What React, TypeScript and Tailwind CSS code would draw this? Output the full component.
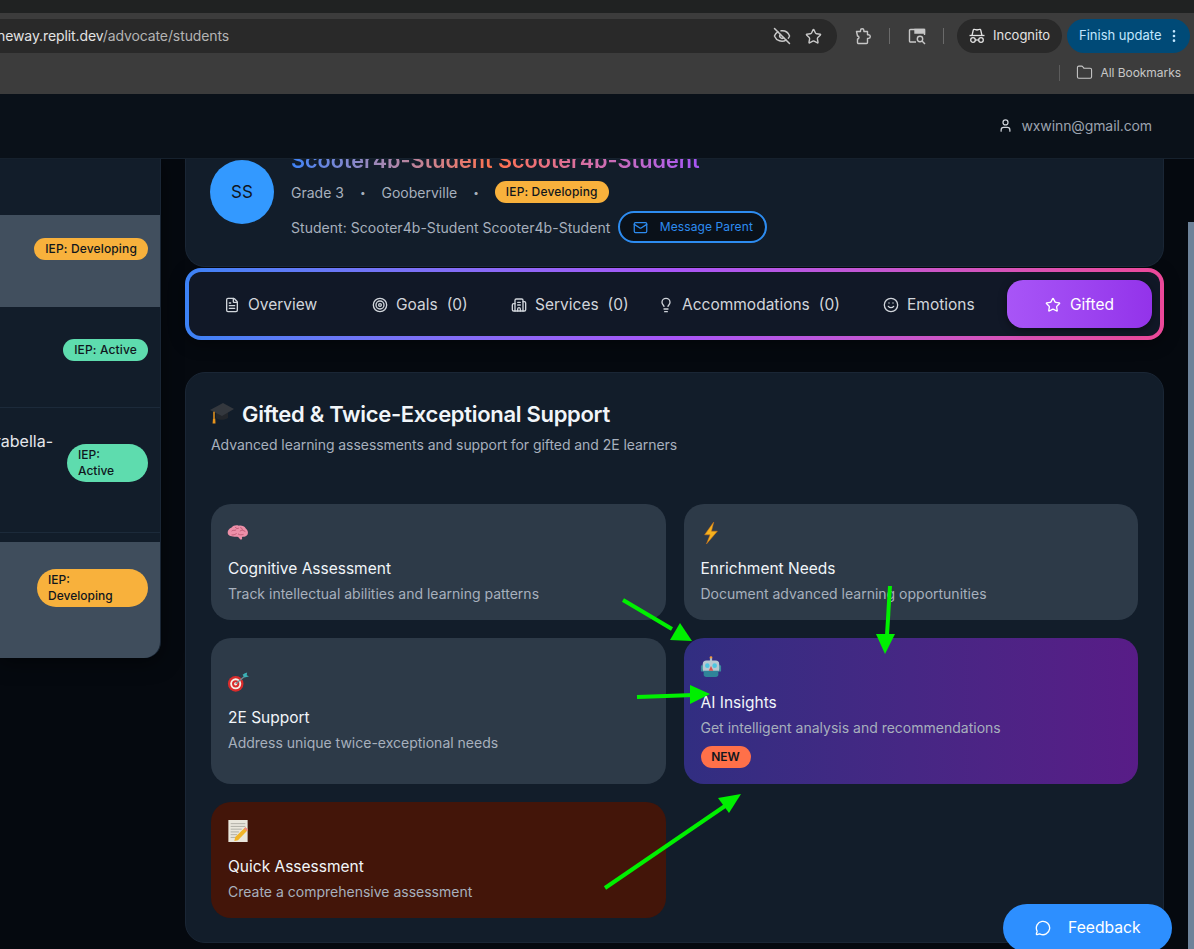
import { EllipsisVertical, EyeOff, FileText, Folder, Lightbulb, Mail, MessageCircle, Smile, Star, Target, User, Building2 } from "lucide-react";
import type { ReactNode } from "react";

// --- small drawings for the emoji in the cards ---
function CapEmoji() {
  return (
    <svg width="24" height="24" viewBox="0 0 24 24" className="shrink-0 -ml-[1px] -mt-[3px]">
      <path d="M6 11v6c2 2.4 9 2.4 12 0v-6z" fill="#23262b" />
      <path d="M0 9 13 2l11 6-12 7z" fill="#34383e" />
      <path d="M4 10.800v7" stroke="#e8941c" strokeWidth="1.500" />
      <path d="M3 17.500h2.200l.3 5H2.600z" fill="#e8941c" />
    </svg>
  );
}
function BrainEmoji() {
  return (
    <svg width="22" height="22" viewBox="0 0 24 24">
      <path d="M1 13c-1-4 2-6 4-7 2-2.500 5-3 8-2 3-.5 6 .5 7.500 3 2 1.500 3 4 2 6.500-1 1.800-3 2.500-5 2.500-1 0-1.500 .5-1 2 .2 1-1.500 1.500-2.500 .5-.8-1-1.500-2.500-3-2.500-3.500 0-9-.5-10-3z" fill="#ec8fa8" />
      <path d="M5 10c2-2 3 0 5-1.500M9 5.500c1 2 3 2 4 1M14 10c2-1.500 4-1 6 .5M5 14c2 .5 4-.5 5.500-1.500M12 13c2 1.500 4 1 6 .5M15 5.500c0 1.500 1 2.500 2.500 2.500" stroke="#b9536f" strokeWidth="0.900" fill="none" />
    </svg>
  );
}
function BoltEmoji() {
  return (
    <svg width="22" height="22" viewBox="0 0 24 24">
      <path d="M15 0 5 14h6l-4 10 12-14h-6.500z" fill="#f6b21e" stroke="#c9701a" strokeWidth="0.600" />
    </svg>
  );
}
function DartEmoji() {
  return (
    <svg width="22" height="22" viewBox="0 0 24 24">
      <circle cx="9.500" cy="14" r="8.500" fill="#d92b2b" />
      <circle cx="9.500" cy="14" r="6" fill="#f3efe6" />
      <circle cx="9.500" cy="14" r="4" fill="#d92b2b" />
      <circle cx="9.500" cy="14" r="1.800" fill="#f3efe6" />
      <path d="M9.500 14 19 6" stroke="#6d8a93" strokeWidth="1.400" />
      <path d="m17 4 2 3 5-1-2.500-1.500 .5-3-2.500 1z" fill="#3bb0b5" />
    </svg>
  );
}
function RobotEmoji() {
  return (
    <svg width="22" height="22" viewBox="0 0 24 24">
      <circle cx="12" cy="1.800" r="1.500" fill="#f29a3e" />
      <rect x="10.800" y="2.500" width="2.400" height="3" fill="#a9bcc6" />
      <rect x="1" y="10" width="3" height="7" rx="1" fill="#3a8a9c" />
      <rect x="20" y="10" width="3" height="7" rx="1" fill="#3a8a9c" />
      <rect x="3" y="5" width="18" height="13" rx="4" fill="#b8c9d1" />
      <path d="M4 16h16v4a3 3 0 0 1-3 3H7a3 3 0 0 1-3-3z" fill="#2f8499" />
      <circle cx="8" cy="10.500" r="2.500" fill="#4fc6e0" />
      <circle cx="16" cy="10.500" r="2.500" fill="#4fc6e0" />
      <path d="m12 11 2.500 5h-5z" fill="#d9534f" />
    </svg>
  );
}
function MemoEmoji() {
  return (
    <svg width="22" height="22" viewBox="0 0 24 24">
      <rect x="1.500" y="0" width="21" height="24" fill="#e9e6dc" />
      <path d="M4 4h16M4 7h16M4 10h12M4 13h9M4 16h7M4 19h6" stroke="#9b9b93" strokeWidth="0.800" />
      <path d="m20 8 3 2.500L12 22l-4 1 1-4.500z" fill="#f0b429" />
      <path d="m20 8 3 2.500-1.500 1.500-3-2.500z" fill="#e88" />
    </svg>
  );
}
function TabSearch() {
  return (
    <svg width="18" height="18" viewBox="0 0 18 18" fill="none" stroke="#c7c7c7" strokeWidth="1.400">
      <path d="M8 15H2.500A1 1 0 0 1 1.500 14V3.500a1 1 0 0 1 1-1H16a.5 .5 0 0 1 .5 .5V8" />
      <path d="M7 2.500h9.500V6H7z" fill="#c7c7c7" />
      <circle cx="12" cy="12" r="2.700" />
      <path d="m14 14 3 3" />
    </svg>
  );
}
function IncognitoIcon() {
  return (
    <svg width="18" height="18" viewBox="0 0 18 18" fill="none" stroke="#e3e3e3" strokeWidth="1.300">
      <path d="M1.500 8.500h15" />
      <path d="m4 8.500 1.300-5.500c.2-.6.7-.8 1.300-.6L9 3l2.400-.6c.6-.2 1.100 0 1.300 .6L14 8.500" />
      <circle cx="5" cy="13" r="2.300" />
      <circle cx="13" cy="13" r="2.300" />
      <path d="M7.300 13h3.400" />
    </svg>
  );
}
function ExtensionIcon() {
  return (
    <svg width="17" height="17" viewBox="0 0 17 17" fill="none" stroke="#c7c7c7" strokeWidth="1.400" strokeLinejoin="round">
      <path d="M1.500 3.500H5.500V2.500a1.700 1.700 0 0 1 3.400 0V3.500h3.600v3.300h1a1.800 1.800 0 0 1 0 3.600h-1v4.100a1 1 0 0 1-1 1H3.500a1 1 0 0 1-1-1V11a1.500 1.500 0 0 0 0-3z" />
    </svg>
  );
}

function Pill({ tone, children }: { tone: "amber" | "green"; children: ReactNode }) {
  const color = tone === "amber" ? "bg-[#f8b13c]" : "bg-[#5edcae]";
  return <span className={`${color} rounded-full px-[11px] h-[22px] flex items-center whitespace-nowrap text-[12px] tracking-[0.15px] font-medium text-[#10161d]`}>{children}</span>;
}

const tabs = [
  { icon: <FileText size={16} />, label: "Overview", count: "", w: "w-[148px]" },
  { icon: <Target size={16} />, label: "Goals", count: "(0)", w: "w-[139px]" },
  { icon: <Building2 size={16} />, label: "Services", count: "(0)", w: "w-[147px]" },
  { icon: <Lightbulb size={16} />, label: "Accommodations", count: "(0)", w: "w-[225px]" },
  { icon: <Smile size={16} />, label: "Emotions", count: "", w: "w-[124px]" },
];

function FeatureCard({ icon, title, desc, className, badge }: { icon: ReactNode; title: string; desc: string; className: string; badge?: boolean }) {
  return (
    <div className={`rounded-[20px] px-[17px] flex flex-col ${className}`}>
      <div className="h-[22px] w-[22px] -ml-[1px] flex items-center">{icon}</div>
      <div className="mt-[13px] text-[15.5px] leading-[24px] font-normal text-[#f1f5f9]">{title}</div>
      <div className="mt-[1px] text-[14px] leading-[24px] text-[#a7b0bd]">{desc}</div>
      {badge && <span className="mt-[6px] w-[50px] h-[22px] rounded-full bg-[#ff7049] flex items-center justify-center text-[12px] font-semibold text-[#10161d]">NEW</span>}
    </div>
  );
}

export default function App() {
  return (
    <div className="relative w-[1194px] h-[949px] overflow-hidden flex flex-col bg-[#05090f] font-['Inter',sans-serif]">
      {/* browser chrome */}
      <div className="h-[13px] bg-[#202222]" />
      <div className="h-[81px] bg-[#3c3c3c] flex flex-col">
        <div className="h-[34px] mt-[6px] flex items-center">
          <div className="w-[837px] h-[34px] bg-[#292929] rounded-r-[17px] flex items-center overflow-hidden">
            <span className="-ml-[3px] -mt-[1px] text-[14px] tracking-[-0.1px] whitespace-nowrap text-[#e3e3e3]">neway.replit.dev<span className="text-[#b4b4b4]">/advocate/students</span></span>
            <div className="ml-auto flex items-center gap-[14px] pr-[15px] text-[#c7c7c7]">
              <EyeOff size={18} />
              <Star size={17} />
            </div>
          </div>
          <div className="ml-[18px]"><ExtensionIcon /></div>
          <div className="ml-[17px] w-[1px] h-[16px] bg-[#6a6a6a]" />
          <div className="ml-[18px]"><TabSearch /></div>
          <div className="ml-[17px] w-[1px] h-[16px] bg-[#6a6a6a]" />
          <div className="ml-[13px] w-[105px] h-[34px] rounded-full bg-[#292929] flex items-center pl-[11px] gap-[7px]">
            <IncognitoIcon />
            <span className="text-[13px] text-[#e3e3e3]">Incognito</span>
          </div>
          <div className="ml-[5px] w-[123px] h-[34px] rounded-full bg-[#004a77] flex items-center pl-[12px] text-[13px] text-[#c2e7ff]">
            <span>Finish update</span>
            <EllipsisVertical size={16} className="ml-[5px]" />
          </div>
        </div>
        <div className="h-[39px] flex items-center justify-end pr-[13px]">
          <div className="w-[1px] h-[16px] bg-[#5c5c5c] mr-[16px]" />
          <Folder size={17} strokeWidth={1.500} className="text-[#c7c7c7] mr-[7px]" />
          <span className="text-[12px] tracking-[-0.05px] text-[#c7c7c7]">All Bookmarks</span>
        </div>
      </div>

      {/* app header */}
      <div className="h-[65px] shrink-0 bg-[#0a1119] border-b border-[#16212d] flex items-center justify-end pr-[42px] pb-[2px] z-10">
        <User size={15} className="text-[#d1d5db] mr-[8px]" />
        <span className="text-[14px] tracking-[-0.1px] text-[#9ca3af]">wxwinn@gmail.com</span>
      </div>

      <div className="flex flex-1 min-h-0">
        {/* student list, scrolled under the header */}
        <div className="w-[161px] h-[499px] shrink-0 bg-[#121d2a] border-r border-[#1a2635] rounded-br-[16px] shadow-[0_4px_20px_rgba(0,0,0,0.5)] flex flex-col">
          <div className="h-[56px]" />
          <div className="h-[92px] bg-[#414f5e] flex items-center justify-end pr-[12px] pb-[24px]">
            <Pill tone="amber">IEP: Developing</Pill>
          </div>
          <div className="h-[101px] border-b border-[#1c2a3a] flex items-center justify-end pr-[12px] pb-[14px]">
            <Pill tone="green">IEP: Active</Pill>
          </div>
          <div className="h-[125px] border-b border-[#1c2a3a] flex items-start justify-end pr-[12px] pt-[21px]">
            <span className="mr-[14px] text-[16px] leading-[24px] text-[#e5e7eb]">rabella-</span>
            <div className="w-[81px] shrink-0 mt-[15px] rounded-[19px] bg-[#5edcae] px-[11px] py-[3px] text-[12px] leading-[16px] font-medium text-[#10161d]">IEP:<br />Active</div>
          </div>
          <div className="h-[116px] mt-[9px] bg-[#3f4d5c] rounded-br-[16px] flex items-start justify-end pr-[12px] pt-[27px]">
            <div className="w-[111px] rounded-[19px] bg-[#f8b13c] px-[11px] py-[3px] text-[12px] leading-[16px] font-medium text-[#10161d]">IEP:<br />Developing</div>
          </div>
        </div>

        <div className="ml-[24px] w-[979px] shrink-0 flex flex-col">
          {/* student header */}
          <div className="relative h-[108px] shrink-0 bg-[#121d2a] border border-t-0 border-[#1a2635] rounded-b-[20px] overflow-hidden pl-[24px]">
            <div className="flex gap-[17px] pt-[1px]">
              <div className="w-[64px] h-[64px] rounded-full bg-[#3399ff] flex items-center justify-center pt-[1px] text-[17px] text-[#10161d]">SS</div>
              <div className="flex flex-col">
                <div className="-mt-[15px] text-[21.6px] leading-[30px] font-semibold whitespace-nowrap w-[409px] bg-gradient-to-r from-[#3b82f6] via-[#ff7049] to-[#a855f7] bg-clip-text text-transparent">Scooter4b-Student Scooter4b-Student</div>
                <div className="mt-[6px] flex items-center h-[22px] text-[14px] text-[#a7b0bd]">
                  <span>Grade 3</span>
                  <span className="mx-[16px] text-[10px]">•</span>
                  <span>Gooberville</span>
                  <span className="mx-[16px] text-[10px]">•</span>
                  <Pill tone="amber">IEP: Developing</Pill>
                </div>
                <div className="mt-[8px] flex items-center text-[14px] tracking-[0.04px] text-[#a7b0bd]">
                  <span>Student: Scooter4b-Student Scooter4b-Student</span>
                  <div className="ml-[8px] w-[149px] h-[32px] rounded-full border-2 border-[#2d8cf0] flex items-center justify-center gap-[12px] bg-[#0a1119] text-[12px] tracking-[0.1px] text-[#2d8cf0]">
                    <Mail size={15} />
                    <span>Message Parent</span>
                  </div>
                </div>
              </div>
            </div>
          </div>

          {/* tabs */}
          <div className="mt-[1px] h-[72px] shrink-0 rounded-[16px] p-[4px] bg-gradient-to-r from-[#3b82f6] via-[#a855f7] to-[#ec4899] shadow-[0_4px_16px_rgba(0,0,0,0.4)]">
            <div className="h-full rounded-[12px] bg-[#111827] flex items-center pl-[35px] text-[15.5px] text-[#d1d5db]">
              {tabs.map((t) => (
                <div key={t.label} className={`${t.w} gap-[8px] shrink-0 flex items-center pt-[1px]`}>
                  {t.icon}
                  <span>{t.label}</span>
                  {t.count && <span className="ml-[1px]">{t.count}</span>}
                </div>
              ))}
              <div className="w-[145px] h-[48px] rounded-[16px] bg-gradient-to-r from-[#a855f7] to-[#9333ea] shadow-[0_2px_8px_rgba(0,0,0,0.4)] flex items-center justify-center gap-[9px] pt-[1px] text-white">
                <Star size={16} />
                <span>Gifted</span>
              </div>
            </div>
          </div>

          {/* gifted panel */}
          <div className="mt-[32px] h-[571px] shrink-0 rounded-[20px] bg-[#121d2a] border border-[#1a2635] px-[25px] pt-[23px]">
            <div className="flex items-center gap-[8px] h-[36px]">
              <CapEmoji />
              <h2 className="text-[22px] leading-[36px] font-semibold text-[#f1f5f9] tracking-[-0.3px]">Gifted &amp; Twice-Exceptional Support</h2>
            </div>
            <p className="mt-[1px] text-[14px] tracking-[-0.06px] leading-[24px] text-[#a7b0bd]">Advanced learning assessments and support for gifted and 2E learners</p>
            <div className="mt-[47px] grid grid-cols-2 gap-[18px] grid-rows-[116px_146px_116px]">
              <FeatureCard icon={<BrainEmoji />} title="Cognitive Assessment" desc="Track intellectual abilities and learning patterns" className="bg-[#2d3a48] pt-[18px]" />
              <FeatureCard icon={<BoltEmoji />} title="Enrichment Needs" desc="Document advanced learning opportunities" className="bg-[#2d3a48] pt-[18px]" />
              <FeatureCard icon={<DartEmoji />} title="2E Support" desc="Address unique twice-exceptional needs" className="bg-[#2d3a48] pt-[33px]" />
              <FeatureCard icon={<RobotEmoji />} title="AI Insights" desc="Get intelligent analysis and recommendations" className="bg-gradient-to-r from-[#312e81] to-[#581c87] pt-[18px]" badge />
              <FeatureCard icon={<MemoEmoji />} title="Quick Assessment" desc="Create a comprehensive assessment" className="bg-[#431509] pt-[18px]" />
            </div>
          </div>
        </div>
      </div>

      {/* scrollbar */}
      <div className="absolute right-0 top-[222px] bottom-0 w-[6px] bg-[#6d8299]" />

      {/* feedback button */}
      <div className="absolute left-[1003px] top-[904px] w-[169px] h-[48px] rounded-[24px] bg-[#2d8fff] flex items-center pl-[32px] gap-[17px] text-[15.7px] text-white">
        <MessageCircle size={16} />
        <span>Feedback</span>
      </div>

      {/* green annotation arrows drawn over the shot */}
      <svg className="absolute inset-0 pointer-events-none" width="1194" height="949" fill="#00f000" stroke="none">
        <path d="M623 600 672 629" stroke="#00f000" strokeWidth="4" />
        <path d="m692 641-22-1 10-17z" />
        <path d="M890 586 887 635" stroke="#00f000" strokeWidth="4" />
        <path d="m885 654-9-20h19z" />
        <path d="M637 697 694 695" stroke="#00f000" strokeWidth="4" />
        <path d="m710 694-20 10v-19z" />
        <path d="M605 888 725 806" stroke="#00f000" strokeWidth="4" />
        <path d="m741 794-23 4 11 15z" />
      </svg>
    </div>
  );
}
